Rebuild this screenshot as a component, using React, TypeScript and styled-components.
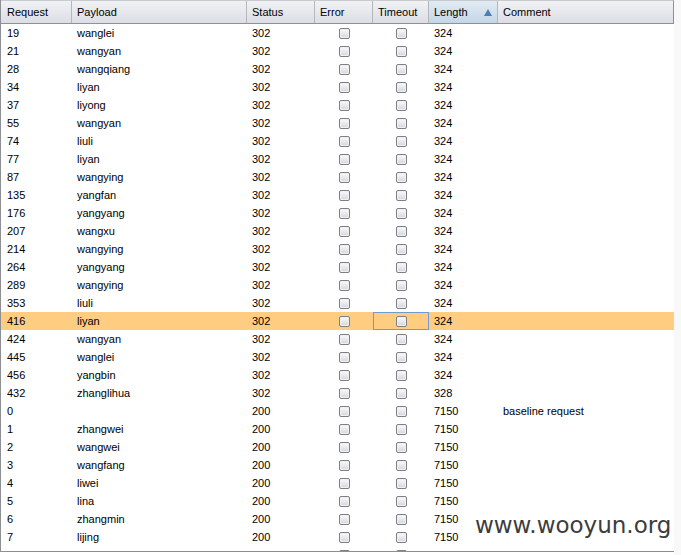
import React from "react";
import styled, { createGlobalStyle } from "styled-components";

const Global = createGlobalStyle`
  html, body { margin: 0; padding: 0; background: #ffffff; }
  body { font-family: "Liberation Sans", Arial, sans-serif; font-size: 11px; color: #000; }
`;

const COLS = "71px 175px 68px 58px 56px 69px 1fr";

const Page = styled.div`
  position: relative;
  display: flex;
  width: 681px;
  height: 555px;
  overflow: hidden;
  background: #ffffff;
`;

const Frame = styled.div`
  width: 673px;
  height: 551px;
  border-left: 1px solid #8e8f93;
  border-bottom: 1px solid #8e8f93;
  display: flex;
  flex-direction: column;
  overflow: hidden;
  background: #ffffff;
`;

const Strip = styled.div`
  flex: 1;
  height: 555px;
  background: #f8f8f8;
`;

const HeaderRow = styled.div`
  display: grid;
  grid-template-columns: ${COLS};
  height: 24px;
  box-sizing: border-box;
  border-top: 1px solid #c8cacf;
  border-bottom: 1px solid #8f9196;
  border-right: 1px solid #8f9196;
  flex-shrink: 0;
`;

const HeaderCell = styled.div<{ $active?: boolean }>`
  display: flex;
  align-items: center;
  justify-content: space-between;
  padding: 0 6px 0 5px;
  border-right: 1px solid #b4b6bb;
  background: ${(p) =>
    p.$active
      ? "linear-gradient(#e2ebf3, #c4d6e6)"
      : "linear-gradient(#f1f2f5, #dcdee5)"};
  white-space: nowrap;
  overflow: hidden;
  &:first-child { padding-left: 6px; }
  &:last-child { border-right: none; }
`;

const SortArrow = styled.span`
  width: 0;
  height: 0;
  border-left: 4px solid transparent;
  border-right: 4px solid transparent;
  border-bottom: 7px solid #4a7eb5;
  margin-right: -1px;
`;

const Body = styled.div`
  flex: 1;
  overflow: hidden;
`;

const Row = styled.div<{ $selected?: boolean }>`
  display: grid;
  grid-template-columns: ${COLS};
  height: 18px;
  background: ${(p) => (p.$selected ? "#fecd82" : "#ffffff")};
`;

const Cell = styled.div<{ $focus?: boolean; $center?: boolean }>`
  display: flex;
  align-items: center;
  justify-content: ${(p) => (p.$center ? "center" : "flex-start")};
  padding-left: ${(p) => (p.$center ? "0" : "5px")};
  box-sizing: border-box;
  white-space: nowrap;
  overflow: hidden;
  border: ${(p) => (p.$focus ? "1px solid #6f9bd0" : "none")};
  &:first-child { padding-left: 6px; }
`;

const Box = styled.span`
  display: inline-block;
  width: 11px;
  height: 11px;
  box-sizing: border-box;
  border: 1px solid #7d7f85;
  border-radius: 2px;
  background: linear-gradient(#fbfbfc, #d4d6dc);
  box-shadow: inset 0 0 0 1px #f0f1f3;
`;

const Watermark = styled.div`
  position: absolute;
  left: 475px;
  top: 512px;
  font-family: "DejaVu Sans", Verdana, sans-serif;
  font-size: 23px;
  color: #3c3c3c;
  pointer-events: none;
`;

type R = [string, string, string, string, string?];

const rows: R[] = [
  ["19", "wanglei", "302", "324"],
  ["21", "wangyan", "302", "324"],
  ["28", "wangqiang", "302", "324"],
  ["34", "liyan", "302", "324"],
  ["37", "liyong", "302", "324"],
  ["55", "wangyan", "302", "324"],
  ["74", "liuli", "302", "324"],
  ["77", "liyan", "302", "324"],
  ["87", "wangying", "302", "324"],
  ["135", "yangfan", "302", "324"],
  ["176", "yangyang", "302", "324"],
  ["207", "wangxu", "302", "324"],
  ["214", "wangying", "302", "324"],
  ["264", "yangyang", "302", "324"],
  ["289", "wangying", "302", "324"],
  ["353", "liuli", "302", "324"],
  ["416", "liyan", "302", "324"],
  ["424", "wangyan", "302", "324"],
  ["445", "wanglei", "302", "324"],
  ["456", "yangbin", "302", "324"],
  ["432", "zhanglihua", "302", "328"],
  ["0", "", "200", "7150", "baseline request"],
  ["1", "zhangwei", "200", "7150"],
  ["2", "wangwei", "200", "7150"],
  ["3", "wangfang", "200", "7150"],
  ["4", "liwei", "200", "7150"],
  ["5", "lina", "200", "7150"],
  ["6", "zhangmin", "200", "7150"],
  ["7", "lijing", "200", "7150"],
  ["8", "wangjing", "200", "7150"],
];

const headers = ["Request", "Payload", "Status", "Error", "Timeout", "Length", "Comment"];

export default function App() {
  return (
    <Page>
      <Global />
      <Frame>
        <HeaderRow>
          {headers.map((h) => (
            <HeaderCell key={h} $active={h === "Length"}>
              <span>{h}</span>
              {h === "Length" && <SortArrow />}
            </HeaderCell>
          ))}
        </HeaderRow>
        <Body>
          {rows.map((r, i) => {
            const sel = r[0] === "416";
            return (
              <Row key={i} $selected={sel}>
                <Cell>{r[0]}</Cell>
                <Cell>{r[1]}</Cell>
                <Cell>{r[2]}</Cell>
                <Cell $center>
                  <Box />
                </Cell>
                <Cell $center $focus={sel}>
                  <Box />
                </Cell>
                <Cell>{r[3]}</Cell>
                <Cell>{r[4] ?? ""}</Cell>
              </Row>
            );
          })}
        </Body>
      </Frame>
      <Strip />
      <Watermark>www.wooyun.org</Watermark>
    </Page>
  );
}
